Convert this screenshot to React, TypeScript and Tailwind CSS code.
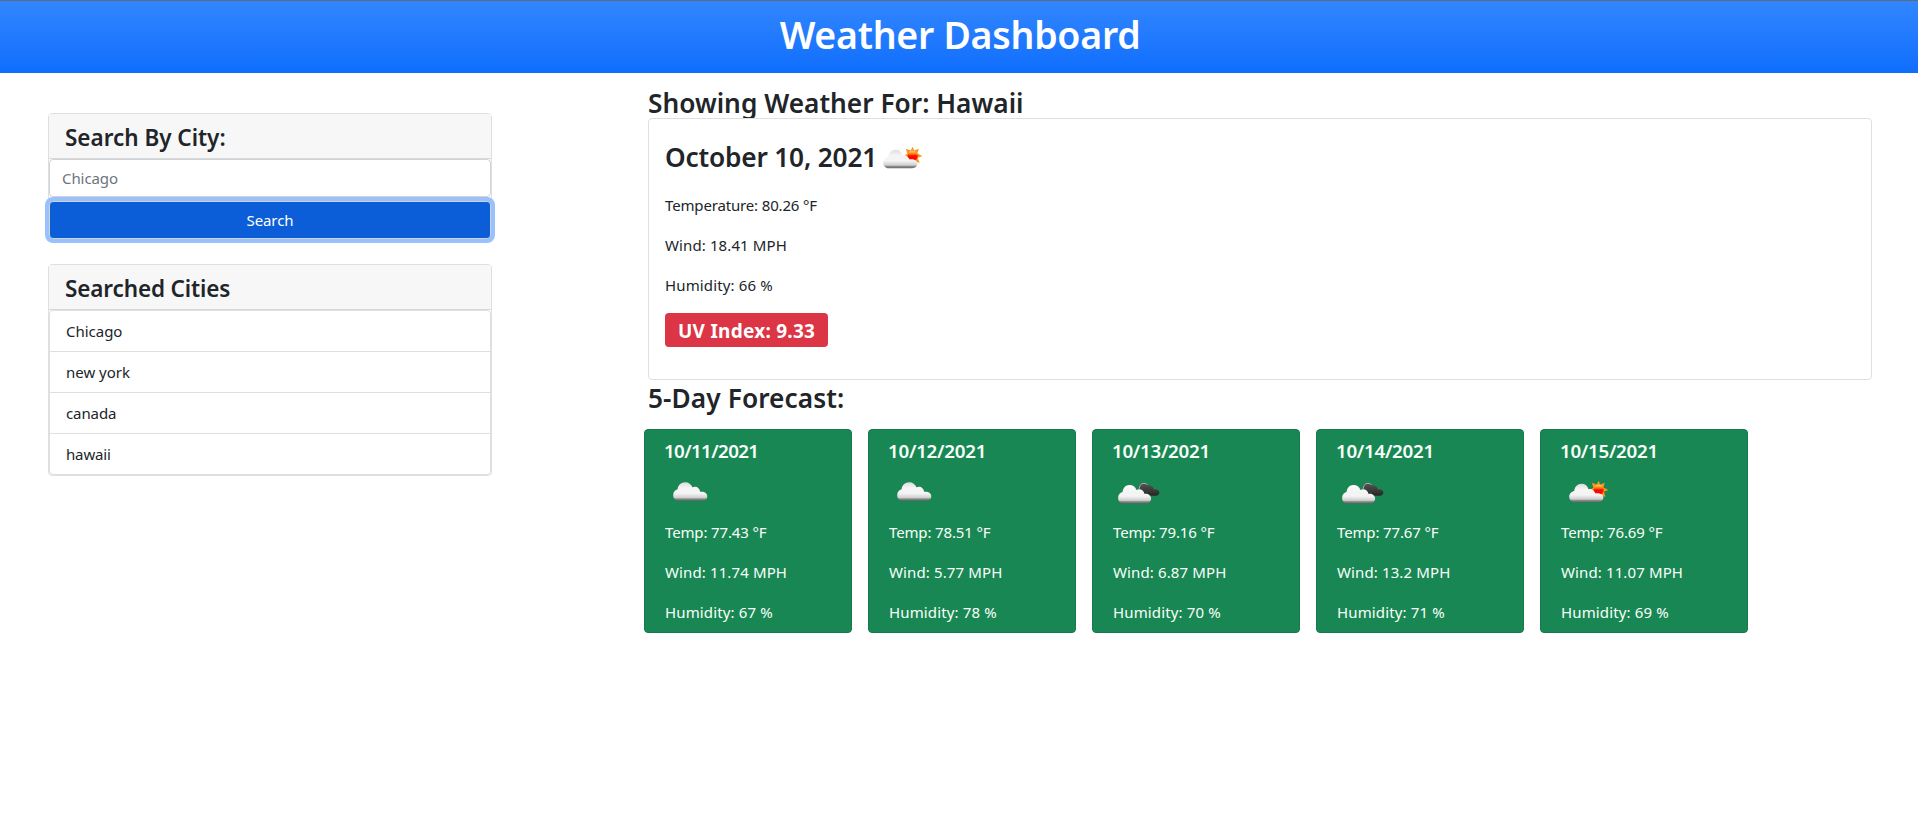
type IconKind = "cloud" | "broken" | "few";

interface Day {
  date: string;
  dateClass: string;
  icon: IconKind;
  temp: string;
  wind: string;
  humidity: string;
}

const days: Day[] = [
  { date: "10/11/2021", dateClass: "tracking-[-0.637px]", icon: "cloud", temp: "77.43", wind: "11.74", humidity: "67" },
  { date: "10/12/2021", dateClass: "tracking-[-0.26px]", icon: "cloud", temp: "78.51", wind: "5.77", humidity: "78" },
  { date: "10/13/2021", dateClass: "tracking-[-0.29px]", icon: "broken", temp: "79.16", wind: "6.87", humidity: "70" },
  { date: "10/14/2021", dateClass: "tracking-[-0.29px]", icon: "broken", temp: "77.67", wind: "13.2", humidity: "71" },
  { date: "10/15/2021", dateClass: "tracking-[-0.29px]", icon: "few", temp: "76.69", wind: "11.07", humidity: "69" },
];

const cities = [
  { name: "Chicago", cls: "tracking-[-0.02px]" },
  { name: "new york", cls: "tracking-[-0.01px]" },
  { name: "canada", cls: "tracking-[-0.1px]" },
  { name: "hawaii", cls: "tracking-[-0.15px]" },
];

function WeatherIcon({ kind, id, className = "" }: { kind: IconKind; id: string; className?: string }) {
  const fill = `url(#${id})`;
  const top = kind === "broken" ? 18 : kind === "few" ? 16.7 : 15.3;
  const bottom = kind === "broken" ? 36.5 : kind === "few" ? 35.3 : 33.8;
  return (
    <svg viewBox="0 0 50 50" className={`block h-[50px] w-[50px] shrink-0 ${className}`}>
      <defs>
        <linearGradient id={id} gradientUnits="userSpaceOnUse" x1="0" x2="0" y1={top} y2={bottom}>
          <stop offset="0" stopColor={kind === "broken" ? "#ffffff" : "#dcdcdc"} />
          <stop offset="0.3" stopColor="#f5f5f5" />
          <stop offset="0.6" stopColor="#f4f4f4" />
          <stop offset="0.83" stopColor="#cfcfcf" />
          <stop offset="0.9" stopColor="#8c8c8c" />
          <stop offset="1" stopColor="#636363" />
        </linearGradient>
        <linearGradient id={`${id}-dark`} x1="0" x2="0" y1="0" y2="1">
          <stop offset="0" stopColor="#565656" />
          <stop offset="1" stopColor="#262626" />
        </linearGradient>
        <linearGradient id={`${id}-sun`} x1="0" x2="0" y1="0" y2="1">
          <stop offset="0.1" stopColor="#ffc24d" />
          <stop offset="0.38" stopColor="#ff5a10" />
          <stop offset="0.5" stopColor="#fb0a00" />
        </linearGradient>
      </defs>
      {kind === "cloud" && (
        <path
          fill={fill}
          d="M13.6 33.8C10.4 33.8 8.2 31.2 8.2 28.2C8.2 25.2 10 22.9 12.6 22.3C13 18.2 16 15.3 20 15.3C23.6 15.3 26.3 17.4 27.4 20.2C31 18.6 34.8 20.8 35.2 24.8C39.4 24.2 42.3 26.4 42.3 29.2C42.3 32 40.4 33.8 37.6 33.8Z"
        />
      )}
      {kind === "few" && (
        <>
          <path
            fill="#f9951d"
            d="M37.6 13.8L39.2 17.6L43.8 15.8L42.4 20.4L47.4 22.9L42.8 24.8L44.6 30L39.6 28.2L37.3 31.8L34 28L30.4 30L32 25L28 23L32.4 20.8L30.8 15.8L35.7 17.6Z"
          />
          <circle cx="37.6" cy="22.8" r="5.1" fill={`url(#${id}-sun)`} />
          <path
            fill={fill}
            d="M13.6 35.3C10.4 35.3 8.2 32.7 8.2 29.8C8.2 26.8 10.6 24.3 13.2 23.9C13.7 19.7 16.6 16.7 20.5 16.7C24 16.7 26.4 18.6 27.4 22C30.6 21.4 33 23.4 34.6 26.4C39.6 26 42.4 28 42.4 30.6C42.4 33.2 40.2 35.3 37.2 35.3Z"
          />
        </>
      )}
      {kind === "broken" && (
        <>
          <path
            fill={`url(#${id}-dark)`}
            d="M25.5 23C25.5 19 27.3 15.9 30.6 15.9C32.8 15.9 34.6 17.1 35.3 18.7C38 18.1 40.4 19.8 41 22.4C44.2 21.9 46.4 23.5 46.4 25.6C46.4 27.5 45 28.8 42.8 28.8H30Z"
          />
          <path d="M26.1 22.5C26.4 18.7 28 16.3 31 16.4C32.6 16.4 33.7 17 34.4 18" fill="none" stroke="#b9b0b2" strokeWidth="1" />
          <path
            fill={fill}
            d="M10.5 36.5C7.3 36.5 5.1 34 5.1 31C5.1 28 7 25.7 9.5 25.1C10 20.8 12.6 18 16.4 18C19.9 18 22.4 19.9 23.4 22.9C27 21.1 31 23.2 31.4 26.7C35.2 26.2 38.1 28.4 38.1 31.5C38.1 34.4 35.9 36.5 32.9 36.5Z"
          />
        </>
      )}
    </svg>
  );
}

function ForecastCard({ day, index }: { day: Day; index: number }) {
  return (
    <article className="h-[204px] w-52 rounded border border-[#177a4c] bg-[#198754] pt-[9px] pl-5 text-[#f8fff9]">
      <h5 className={`-ml-px text-[18.75px] leading-6 font-semibold ${day.dateClass}`}>{day.date}</h5>
      <WeatherIcon kind={day.icon} id={`forecast-${index}`} className="mt-1 mb-[3px]" />
      <div className="flex flex-col gap-4">
        <p className="tracking-[-0.145px]">Temp: {day.temp} °F</p>
        <p className="tracking-[0.12px]">Wind: {day.wind} MPH</p>
        <p className="tracking-[0.145px]">Humidity: {day.humidity} %</p>
      </div>
    </article>
  );
}

export default function App() {
  return (
    <div className="min-h-screen bg-white font-['Noto_Sans','Open_Sans',sans-serif] text-[15px] leading-6 text-[#212529]">
      <header className="h-[73px] border-t border-[#5f6b7a] bg-linear-to-b from-[#3186ff] to-[#0d6efd] pt-[10px]">
        <h1 className="pl-0.5 text-center text-[37.5px] leading-[47px] font-semibold tracking-[-0.272px] text-white">
          Weather Dashboard
        </h1>
      </header>

      <div className="flex">
        <aside className="mt-10 ml-12 flex w-[444px] flex-col gap-6">
          <section className="rounded border border-[#dfdfdf]">
            <h3 className="h-[45px] border-b border-[#d8d8d8] bg-[#f7f7f7] pt-[9px] pl-4 text-[22.5px] leading-[29px] font-semibold tracking-[-0.02px]">
              Search By City:
            </h3>
            <input
              type="text"
              placeholder="Chicago"
              className="block h-[38px] w-full rounded border border-[#ced4da] bg-white px-3 tracking-[-0.08px] outline-none placeholder:text-[#6c757d]"
            />
            <button className="mt-1 block h-[38px] w-full rounded border border-[#ced4da] bg-[#0b5ed7] tracking-[-0.1px] text-white shadow-[0_0_0_4px_#98c1fe]">
              Search
            </button>
          </section>

          <section className="rounded border border-[#dfdfdf]">
            <h3 className="h-[45px] border-b border-[#d8d8d8] bg-[#f7f7f7] pt-[9px] pl-4 text-[22.5px] leading-[29px] font-semibold tracking-[-0.13px]">
              Searched Cities
            </h3>
            <ul className="divide-y divide-[#dfdfdf] rounded border border-[#dfdfdf]">
              {cities.map((c) => (
                <li key={c.name} className={`h-10 pl-4 leading-10 not-last:h-[41px] ${c.cls}`}>
                  {c.name}
                </li>
              ))}
            </ul>
          </section>
        </aside>

        <main className="ml-[156px] w-[1224px] pt-[13px]">
          <h2 className="h-8 text-[26.25px] leading-[35px] font-semibold tracking-[0.01px]">
            Showing Weather For: Hawaii
          </h2>
          <section className="relative h-[262px] rounded border border-[#dfdfdf] bg-white pt-[21px] pl-4">
            <div className="flex h-[34px]">
              <h2 className="w-[210px] text-[26.25px] leading-[34px] font-semibold whitespace-nowrap tracking-[-0.18px]">
                October 10, 2021
              </h2>
              <WeatherIcon kind="few" id="current" className="-mt-[7px]" />
            </div>
            <div className="mt-[19px] flex flex-col gap-4">
              <p className="tracking-[-0.155px]">Temperature: 80.26 °F</p>
              <p className="tracking-[0.11px]">Wind: 18.41 MPH</p>
              <p className="tracking-[0.145px]">Humidity: 66 %</p>
            </div>
            <p className="mt-4 h-[34px] w-[163px] rounded bg-[#dc3545] pl-[13px] text-[19px] leading-9 font-bold tracking-[0.26px] whitespace-nowrap text-white">
              UV Index: 9.33
            </p>
          </section>

          <h2 className="mt-px text-[26.25px] leading-[34px] font-semibold tracking-[0.08px]">5-Day Forecast:</h2>
          <div className="mt-[14px] -ml-1 flex gap-4">
            {days.map((d, i) => (
              <ForecastCard key={d.date} day={d} index={i} />
            ))}
          </div>
        </main>
      </div>
    </div>
  );
}
